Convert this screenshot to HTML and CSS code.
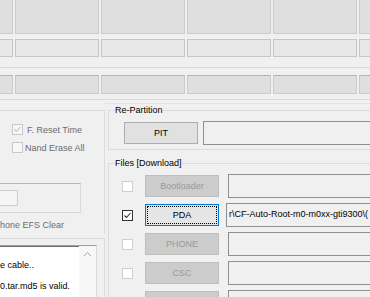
FILE: index.html
```html
<!DOCTYPE html>
<html>
<head>
    <title>Odin</title>
    <link rel="stylesheet" href="styles.css">
</head>
<body>
    <div id="janela">
        <div class="topo">
            <div class="linha linha-id">
                <div class="celula"></div><div class="celula"></div><div class="celula"></div>
                <div class="celula"></div><div class="celula"></div><div class="celula"></div>
            </div>
            <div class="linha linha-com">
                <div class="celula"></div><div class="celula"></div><div class="celula"></div>
                <div class="celula"></div><div class="celula"></div><div class="celula"></div>
            </div>
            <div class="separador"></div>
            <div class="linha linha-msg">
                <div class="celula"></div><div class="celula"></div><div class="celula"></div>
                <div class="celula"></div><div class="celula"></div><div class="celula"></div>
            </div>
            <div class="separador fim"></div>
        </div>

        <div class="principal">
            <div class="esquerda">
                <div class="opcoes">
                    <div class="opcao">
                        <span class="caixa desativada"><svg width="9" height="9" viewBox="0 0 9 9"><path d="M1.5 4.5 L3.5 6.5 L7.5 2" fill="none" stroke="#c2c2c2" stroke-width="1.1"/></svg></span>
                        <span class="rotulo">F. Reset Time</span>
                    </div>
                    <div class="opcao nand">
                        <span class="caixa desativada"></span>
                        <span class="rotulo">Nand Erase All</span>
                    </div>
                    <div class="quadro">
                        <div class="botao-mini"></div>
                    </div>
                    <div class="opcao efs">
                        <span class="rotulo">Phone EFS Clear</span>
                    </div>
                </div>
                <div class="mensagens">
                    <div class="log">
                        <div class="texto">
                            <p>e cable..</p>
                            <p>0.tar.md5 is valid.</p>
                        </div>
                        <div class="rolagem">
                            <svg width="17" height="17" viewBox="0 0 17 17"><path d="M5 10 L8.5 6.5 L12 10" fill="none" stroke="#a6a6a6" stroke-width="1"/></svg>
                        </div>
                    </div>
                </div>
            </div>

            <div class="direita">
                <fieldset class="grupo">
                    <legend>Re-Partition</legend>
                    <div class="conteudo linha-pit">
                        <button type="button" class="botao">PIT</button>
                        <div class="campo"></div>
                    </div>
                </fieldset>

                <fieldset class="grupo arquivos">
                    <legend>Files [Download]</legend>
                    <div class="conteudo">
                        <div class="linha-arq">
                            <span class="caixa"></span>
                            <button type="button" class="botao desligado">Bootloader</button>
                            <div class="campo"></div>
                        </div>
                        <div class="linha-arq">
                            <span class="caixa marcada"><svg width="9" height="9" viewBox="0 0 9 9"><path d="M1.5 4.5 L3.5 6.5 L7.5 2" fill="none" stroke="#333" stroke-width="1.1"/></svg></span>
                            <button type="button" class="botao foco">PDA</button>
                            <div class="campo pda">r\CF-Auto-Root-m0-m0xx-gti9300\(</div>
                        </div>
                        <div class="linha-arq">
                            <span class="caixa"></span>
                            <button type="button" class="botao desligado">PHONE</button>
                            <div class="campo"></div>
                        </div>
                        <div class="linha-arq">
                            <span class="caixa"></span>
                            <button type="button" class="botao desligado">CSC</button>
                            <div class="campo"></div>
                        </div>
                        <div class="linha-arq">
                            <span class="caixa"></span>
                            <button type="button" class="botao desligado">UMS</button>
                            <div class="campo"></div>
                        </div>
                    </div>
                </fieldset>
            </div>
        </div>
    </div>
</body>
</html>
```

FILE: styles.css
```css
* {
    box-sizing: border-box;
}
html,
body {
    margin: 0;
    padding: 0;
}
body {
    background-color: #f0f0f0;
    color: #000;
    font-family: "Liberation Sans", Arial, sans-serif;
    font-size: 9px;
}
#janela {
    width: 370px;
    height: 297px;
    overflow: hidden;
}

/* faixa das portas COM no topo */
.topo {
    height: 100px;
}
.linha {
    display: flex;
    gap: 2px;
    margin-left: -71px;
}
.celula {
    flex: 0 0 84px;
}
.linha-id {
    height: 34px;
}
.linha-id .celula {
    background-color: #dfdfdf;
    border: 1px solid #cbcbcb;
    border-top: none;
}
.linha-com {
    height: 18px;
    margin-top: 5px;
}
.linha-com .celula {
    border: 1px solid #c6c6c6;
    background: repeating-conic-gradient(#e3e3e3 0 25%, #ebebeb 0 50%) 0 0 / 2px 2px;
}
.separador {
    height: 1px;
    margin-top: 10px;
    background-color: #dadada;
}
.separador.fim {
    margin-top: 5px;
}
.linha-msg {
    height: 19px;
    margin-top: 7px;
}
.linha-msg .celula {
    background-color: #dfdfdf;
    border: 1px solid #cbcbcb;
    border-top-color: #b2b2b2;
}

/* parte de baixo */
.principal {
    display: flex;
    height: 197px;
}
.esquerda {
    flex: 0 0 105px;
    display: flex;
    flex-direction: column;
}
.opcoes {
    height: 131px;
    margin-top: 10px;
    padding-top: 12px;
    border-top: 1px solid #dcdcdc;
    border-right: 1px solid #dcdcdc;
}
.opcao {
    display: flex;
    align-items: center;
    gap: 4px;
    height: 13px;
    padding-left: 12px;
    color: #6d6d6d;
    white-space: nowrap;
}
.opcao.nand {
    margin-top: 5px;
    gap: 2px;
}
.opcao.efs {
    margin-top: 5px;
    margin-left: -6px;
    padding-left: 0;
}
.quadro {
    width: 81px;
    height: 30px;
    margin-top: 29px;
    padding-top: 6px;
    border-top: 1px solid #b4b4b4;
    border-right: 1px solid #d9d9d9;
    border-bottom: 1px solid #d9d9d9;
}
.botao-mini {
    width: 19px;
    height: 16px;
    margin-left: -1px;
    border: 1px solid #cccccc;
    background-color: #f5f5f5;
}
.mensagens {
    flex: 1;
    margin-top: 5px;
    padding-top: 6px;
    border-top: 1px solid #dcdcdc;
    border-right: 1px solid #dcdcdc;
}
.log {
    display: flex;
    width: 97px;
    height: 100%;
    background-color: #fff;
    border-top: 1px solid #a0a0a0;
    border-right: 1px solid #d9d9d9;
    box-shadow: inset 0 1px #6f6f6f;
}
.texto {
    flex: 1;
    padding-top: 9px;
    overflow: hidden;
}
.texto p {
    margin: 0;
    line-height: 21px;
    white-space: nowrap;
}
.rolagem {
    flex: 0 0 17px;
    background-color: #f7f7f7;
}
.rolagem svg {
    display: block;
}

/* coluna da direita */
.direita {
    flex: 1;
    min-width: 0;
    margin-top: 3px;
    padding: 1px 0 0 3px;
    border-top: 1px solid #e3e3e3;
}
.grupo {
    width: 300px;
    min-width: 0;
    margin: 0;
    padding: 0;
    border: 1px solid #dcdcdc;
}
.grupo legend {
    margin-left: 6px;
    padding: 0;
    line-height: 11px;
}
.linha-pit {
    display: flex;
    align-items: center;
    gap: 5px;
    padding: 5px 0 4px 15px;
}
.arquivos {
    margin-top: 8px;
}
.arquivos .conteudo {
    display: flex;
    flex-direction: column;
    gap: 5px;
    padding: 5px 0 0 13px;
}
.linha-arq {
    display: flex;
    align-items: center;
}
.caixa {
    flex: none;
    display: flex;
    align-items: center;
    justify-content: center;
    width: 11px;
    height: 11px;
    border: 1px solid #cfcfcf;
    background-color: #fff;
}
.caixa.desativada {
    border-color: #c8c8c8;
    background-color: #f7f7f7;
}
.caixa.marcada {
    border-color: #333;
}
.linha-arq .caixa {
    margin-right: 12px;
}
.botao {
    flex: none;
    width: 74px;
    height: 22px;
    padding: 0;
    border: 1px solid #adadad;
    background-color: #e1e1e1;
    color: #000;
    font: inherit;
}
.botao.desligado {
    border-color: #bfbfbf;
    background-color: #cccccc;
    color: #9a9a9a;
}
.botao.foco {
    border-color: #0078d7;
    background-color: #e5e5e5;
    outline: 1px dotted #000;
    outline-offset: -3px;
}
.campo {
    flex: 1;
    height: 24px;
    padding-left: 2px;
    border: 1px solid #8f8f8f;
    background-color: #f0f0f0;
    line-height: 21px;
    white-space: nowrap;
    overflow: hidden;
}
.linha-arq .campo {
    margin-left: 9px;
}
.linha-arq .campo.pda {
    margin-left: 7px;
}
```
